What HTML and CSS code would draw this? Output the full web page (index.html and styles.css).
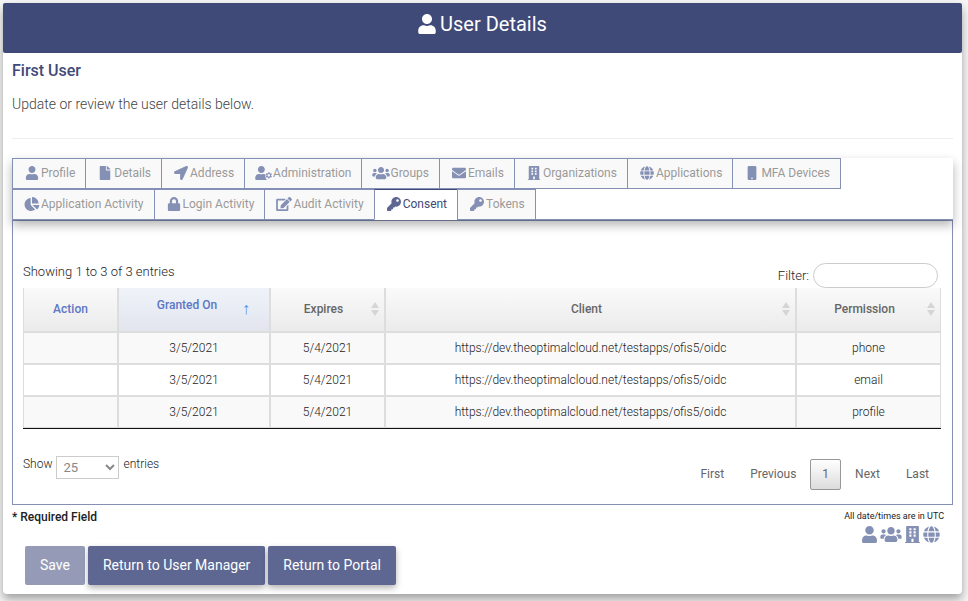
FILE: index.html
```html
<!DOCTYPE html>
<html lang="en">

<head>
    <meta charset="UTF-8">
    <meta name="viewport" content="width=device-width, initial-scale=1.0">
    <title>User Details</title>
    <link rel="stylesheet" href="styles.css">
</head>

<body>
    <svg class="sprite" aria-hidden="true">
        <symbol id="user" viewBox="0 0 448 512">
            <path d="M224 256c70.7 0 128-57.3 128-128S294.7 0 224 0 96 57.3 96 128s57.3 128 128 128zm89.6 32h-16.7c-22.2 10.2-46.9 16-72.9 16s-50.6-5.8-72.9-16h-16.7C60.2 288 0 348.2 0 422.4V464c0 26.5 21.5 48 48 48h352c26.5 0 48-21.5 48-48v-41.6c0-74.2-60.2-134.4-134.4-134.4z" />
        </symbol>
        <symbol id="file" viewBox="0 0 384 512">
            <path d="M224 136V0H24C10.7 0 0 10.7 0 24v464c0 13.3 10.7 24 24 24h336c13.3 0 24-10.7 24-24V160H248c-13.2 0-24-10.8-24-24zm160-14.1v6.1H256V0h6.1c6.4 0 12.5 2.5 17 7l97.9 98c4.5 4.5 7 10.6 7 16.9z" />
        </symbol>
        <symbol id="arrow" viewBox="0 0 512 512">
            <path d="M444.52 3.52L28.74 195.42c-47.97 22.39-31.98 92.75 19.19 92.75h175.91v175.91c0 51.17 70.36 67.17 92.75 19.19l191.9-415.78c15.99-38.39-25.59-79.97-63.97-63.97z" />
        </symbol>
        <symbol id="user-cog" viewBox="0 0 640 512">
            <path d="M224 256c70.7 0 128-57.3 128-128S294.7 0 224 0 96 57.3 96 128s57.3 128 128 128zm89.6 32h-16.7c-22.2 10.2-46.9 16-72.9 16s-50.6-5.8-72.9-16h-16.7C60.2 288 0 348.2 0 422.4V464c0 26.5 21.5 48 48 48h352c10 0 18-3 25-7l-1-14-30-18c-12-9-16-22-12-36l7-20-15-15c-10-11-12-23-7-36l18-38c-20-24-44-40-71-40z" />
            <path fill-rule="evenodd" d="M474 225h44l8 38 24 14 37-13 22 38-29 26v28l29 26-22 38-37-13-24 14-8 38h-44l-8-38-24-14-37 13-22-38 29-26v-28l-29-26 22-38 37 13 24-14zM496 295a47 47 0 1 0 0 94 47 47 0 0 0 0-94z" />
        </symbol>
        <symbol id="users" viewBox="0 0 640 512">
            <path d="M96 224c35.3 0 64-28.7 64-64s-28.7-64-64-64-64 28.7-64 64 28.7 64 64 64zm448 0c35.3 0 64-28.7 64-64s-28.7-64-64-64-64 28.7-64 64 28.7 64 64 64zm32 32h-64c-17.6 0-33.5 7.1-45.1 18.6 40.3 22.1 68.9 62 75.1 109.4h66c17.7 0 32-14.3 32-32v-32c0-35.3-28.7-64-64-64zm-256 0c61.9 0 112-50.1 112-112S381.9 32 320 32 208 82.1 208 144s50.1 112 112 112zm76.8 32h-8.3c-20.8 10-43.9 16-68.5 16s-47.6-6-68.5-16h-8.3C179.6 288 128 339.6 128 403.2V432c0 26.5 21.5 48 48 48h288c26.5 0 48-21.5 48-48v-28.8c0-63.6-51.6-115.2-115.2-115.2zm-223.7-13.4C161.5 263.1 145.6 256 128 256H64c-35.3 0-64 28.7-64 64v32c0 17.7 14.3 32 32 32h65.9c6.3-47.4 34.9-87.3 75.2-109.4z" />
        </symbol>
        <symbol id="envelope" viewBox="0 0 512 512">
            <path d="M502.3 190.8c3.9-3.1 9.7-.2 9.7 4.7V400c0 26.5-21.5 48-48 48H48c-26.5 0-48-21.5-48-48V195.6c0-5 5.7-7.8 9.7-4.7 22.4 17.4 52.1 39.5 154.1 113.6 21.1 15.4 56.7 47.8 92.2 47.6 35.7.3 72-32.8 92.3-47.6 102-74.1 131.6-96.3 154-113.7zM256 320c23.2.4 56.6-29.2 73.4-41.4 132.7-96.3 142.8-104.7 173.4-128.7 5.8-4.5 9.2-11.5 9.2-18.9v-19c0-26.5-21.5-48-48-48H48c-26.5 0-48 21.5-48 48v19c0 7.4 3.4 14.3 9.2 18.9 30.6 23.9 40.7 32.4 173.4 128.7 16.8 12.2 50.2 41.8 73.4 41.4z" />
        </symbol>
        <symbol id="building" viewBox="0 0 448 512">
            <path fill-rule="evenodd" d="M436 480h-20V24c0-13.3-10.7-24-24-24H56C42.7 0 32 10.7 32 24v456H12c-6.6 0-12 5.4-12 12v20h448v-20c0-6.6-5.4-12-12-12zM128 64h64v64h-64zM256 64h64v64h-64zM128 160h64v64h-64zM256 160h64v64h-64zM128 256h64v64h-64zM256 256h64v64h-64zM192 384h64v96h-64z" />
        </symbol>
        <symbol id="globe" viewBox="0 0 496 512">
            <path d="M336.5 160C322 70.7 287.8 8 248 8s-74 62.7-88.5 152h177zM152 256c0 22.2 1.2 43.5 3.3 64h185.3c2.1-20.5 3.3-41.8 3.3-64s-1.2-43.5-3.3-64H155.3c-2.1 20.5-3.3 41.8-3.3 64zm324.7-96c-28.6-67.9-86.5-120.4-158-141.6 24.4 33.8 41.2 84.7 50 141.6h108zM177.2 18.4C105.8 39.6 47.8 92.1 19.3 160h108c8.7-56.9 25.5-107.8 49.9-141.6zM487.4 192H372.7c2.1 21 3.3 42.5 3.3 64s-1.2 43-3.3 64h114.6c5.5-20.5 8.6-41.8 8.6-64s-3.1-43.5-8.5-64zM120 256c0-21.5 1.2-43 3.3-64H8.6C3.2 212.5 0 233.8 0 256s3.2 43.5 8.6 64h114.6c-2-21-3.2-42.5-3.2-64zm39.5 96c14.5 89.3 48.7 152 88.5 152s74-62.7 88.5-152h-177zm159.3 141.6c71.4-21.2 129.4-73.7 158-141.6h-108c-8.8 56.9-25.6 107.8-50 141.6zM19.3 352c28.6 67.9 86.5 120.4 158 141.6-24.4-33.8-41.2-84.7-50-141.6h-108z" />
        </symbol>
        <symbol id="mobile" viewBox="0 0 320 512">
            <path d="M272 0H48C21.5 0 0 21.5 0 48v416c0 26.5 21.5 48 48 48h224c26.5 0 48-21.5 48-48V48c0-26.5-21.5-48-48-48zM160 480c-17.7 0-32-14.3-32-32s14.3-32 32-32 32 14.3 32 32-14.3 32-32 32z" />
        </symbol>
        <symbol id="pie" viewBox="0 0 544 512">
            <path d="M527.79 288H290.5l158.03 158.03c6.04 6.04 15.98 6.53 22.19.68 38.7-36.46 65.32-85.56 73.13-140.86 1.34-9.46-6.51-17.85-16.06-17.85zm-15.83-64.8C503.72 103.74 408.26 8.28 288.8.04 279.68-.59 272 7.1 272 16.24V240h223.77c9.14 0 16.82-7.68 16.19-16.8zM224 288V50.71c0-9.55-8.39-17.4-17.84-16.06C86.99 51.49-4.1 155.6.14 280.37 4.5 408.51 114.83 513.59 243.03 511.98c50.4-.63 96.97-16.87 135.26-44.03 7.9-5.6 8.42-17.23 1.57-24.08L224 288z" />
        </symbol>
        <symbol id="lock" viewBox="0 0 448 512">
            <path d="M400 224h-24v-72C376 68.2 307.8 0 224 0S72 68.2 72 152v72H48c-26.5 0-48 21.5-48 48v192c0 26.5 21.5 48 48 48h352c26.5 0 48-21.5 48-48V272c0-26.5-21.5-48-48-48zm-104 0H152v-72c0-39.7 32.3-72 72-72s72 32.3 72 72v72z" />
        </symbol>
        <symbol id="edit" viewBox="0 0 576 512">
            <path d="M402.6 83.2l90.2 90.2c3.8 3.8 3.8 10 0 13.8L274.4 405.6l-92.8 10.3c-12.4 1.4-22.9-9.1-21.5-21.5l10.3-92.8L388.8 83.2c3.8-3.8 10-3.8 13.8 0zm162-22.9l-48.8-48.8c-15.2-15.2-39.9-15.2-55.2 0l-35.4 35.4c-3.8 3.8-3.8 10 0 13.8l90.2 90.2c3.8 3.8 10 3.8 13.8 0l35.4-35.4c15.2-15.3 15.2-40 0-55.2zM384 346.2V448H64V128h229.8c3.2 0 6.2-1.3 8.5-3.5l40-40c7.6-7.6 2.2-20.5-8.5-20.5H48C21.5 64 0 85.5 0 112v352c0 26.5 21.5 48 48 48h352c26.5 0 48-21.5 48-48V306.2c0-10.7-12.9-16-20.5-8.5l-40 40c-2.2 2.3-3.5 5.3-3.5 8.5z" />
        </symbol>
        <symbol id="key" viewBox="0 0 512 512">
            <path d="M512 176C512 273.2 433.2 352 336 352c-11.22 0-22.19-1.06-32.83-3.07l-24.01 27.01A24 24 0 0 1 261.22 384H224v40c0 13.26-10.75 24-24 24h-40v40c0 13.26-10.75 24-24 24H24c-13.26 0-24-10.75-24-24v-78.06c0-6.37 2.53-12.47 7.03-16.97l161.8-161.8C163.1 213.8 160 195.27 160 176 160 78.8 238.8 0 336 0 433.49 0 512 78.51 512 176zM336 128c0 26.51 21.49 48 48 48s48-21.49 48-48-21.49-48-48-48-48 21.49-48 48z" />
        </symbol>
        <symbol id="sort" viewBox="0 0 8 14">
            <path d="M4 0l4 6H0zM0 8h8l-4 6z" />
        </symbol>
    </svg>

    <main class="card">
        <header class="header">
            <svg class="header-icon"><use href="#user" /></svg>
            <h1>User Details</h1>
        </header>
        <div class="content">
            <h2>First User</h2>
            <p class="intro">Update or review the user details below.</p>
            <hr>

            <nav class="tabs">
                <a class="tab" href="#"><svg class="icon"><use href="#user" /></svg>Profile</a>
                <a class="tab" href="#"><svg class="icon"><use href="#file" /></svg>Details</a>
                <a class="tab" href="#"><svg class="icon"><use href="#arrow" /></svg>Address</a>
                <a class="tab" href="#"><svg class="icon"><use href="#user-cog" /></svg>Administration</a>
                <a class="tab" href="#"><svg class="icon"><use href="#users" /></svg>Groups</a>
                <a class="tab" href="#"><svg class="icon"><use href="#envelope" /></svg>Emails</a>
                <a class="tab" href="#"><svg class="icon"><use href="#building" /></svg>Organizations</a>
                <a class="tab" href="#"><svg class="icon"><use href="#globe" /></svg>Applications</a>
                <a class="tab" href="#"><svg class="icon"><use href="#mobile" /></svg>MFA Devices</a>
                <a class="tab" href="#"><svg class="icon"><use href="#pie" /></svg>Application Activity</a>
                <a class="tab" href="#"><svg class="icon"><use href="#lock" /></svg>Login Activity</a>
                <a class="tab" href="#"><svg class="icon"><use href="#edit" /></svg>Audit Activity</a>
                <a class="tab active" href="#"><svg class="icon"><use href="#key" /></svg>Consent</a>
                <a class="tab" href="#"><svg class="icon"><use href="#key" /></svg>Tokens</a>
            </nav>

            <section class="panel">
                <div class="table-top">
                    <div class="info">Showing 1 to 3 of 3 entries</div>
                    <div class="filter">
                        <label for="filter">Filter:</label>
                        <input type="search" id="filter">
                    </div>
                </div>

                <table class="grid">
                    <colgroup>
                        <col class="col-action">
                        <col class="col-granted">
                        <col class="col-expires">
                        <col>
                        <col class="col-permission">
                    </colgroup>
                    <thead>
                        <tr>
                            <th class="link">Action</th>
                            <th class="link sorted"><div class="head"><span>Granted On</span><span class="up">↑</span></div></th>
                            <th><div class="head"><span>Expires</span><svg class="sort"><use href="#sort" /></svg></div></th>
                            <th><div class="head"><span>Client</span><svg class="sort"><use href="#sort" /></svg></div></th>
                            <th><div class="head"><span>Permission</span><svg class="sort"><use href="#sort" /></svg></div></th>
                        </tr>
                    </thead>
                    <tbody>
                        <tr>
                            <td></td>
                            <td>3/5/2021</td>
                            <td>5/4/2021</td>
                            <td>https://dev.theoptimalcloud.net/testapps/ofis5/oidc</td>
                            <td>phone</td>
                        </tr>
                        <tr>
                            <td></td>
                            <td>3/5/2021</td>
                            <td>5/4/2021</td>
                            <td>https://dev.theoptimalcloud.net/testapps/ofis5/oidc</td>
                            <td>email</td>
                        </tr>
                        <tr>
                            <td></td>
                            <td>3/5/2021</td>
                            <td>5/4/2021</td>
                            <td>https://dev.theoptimalcloud.net/testapps/ofis5/oidc</td>
                            <td>profile</td>
                        </tr>
                    </tbody>
                </table>

                <div class="table-bottom">
                    <div class="length">
                        <label for="length">Show</label>
                        <select id="length">
                            <option>10</option>
                            <option selected>25</option>
                            <option>50</option>
                        </select>
                        <span>entries</span>
                    </div>
                    <div class="pager">
                        <button type="button">First</button>
                        <button type="button">Previous</button>
                        <button type="button" class="current">1</button>
                        <button type="button">Next</button>
                        <button type="button">Last</button>
                    </div>
                </div>
            </section>

            <footer class="footer">
                <div>
                    <p class="required">* Required Field</p>
                    <div class="buttons">
                        <button type="button" class="btn" disabled>Save</button>
                        <button type="button" class="btn">Return to User Manager</button>
                        <button type="button" class="btn">Return to Portal</button>
                    </div>
                </div>
                <div class="notes">
                    <p>All date/times are in UTC</p>
                    <div class="legend">
                        <svg class="legend-icon"><use href="#user" /></svg>
                        <svg class="legend-icon wide"><use href="#users" /></svg>
                        <svg class="legend-icon"><use href="#building" /></svg>
                        <svg class="legend-icon"><use href="#globe" /></svg>
                    </div>
                </div>
            </footer>
        </div>
    </main>
</body>

</html>
```
FILE: styles.css
```css
* {
    box-sizing: border-box;
    margin: 0;
    padding: 0;
}

body {
    padding: 3px 6px 7px 3px;
    background-color: #f5f5f5;
    font-family: Roboto, "Liberation Sans", sans-serif;
    font-size: 12px;
    font-weight: 300;
    color: #222;
}

button,
input,
select {
    font-family: inherit;
    font-size: inherit;
    font-weight: inherit;
}

svg {
    fill: currentColor;
}

.sprite {
    display: none;
}

.card {
    background-color: white;
    border-radius: 4px;
    box-shadow: 0 5px 10px rgba(0, 0, 0, 0.35);
}

.header {
    display: flex;
    justify-content: center;
    gap: 4px;
    height: 50px;
    padding-top: 9px;
    border-radius: 2px;
    background-color: #3f4a78;
    color: white;
}

.header h1 {
    font-size: 20px;
    line-height: 24px;
    font-weight: 400;
}

.header-icon {
    width: 18px;
    height: 20px;
    margin-top: 2px;
}

.content {
    padding: 8px 9px 9px;
}

h2 {
    font-size: 16px;
    line-height: 20px;
    font-weight: 500;
    color: #3f4a78;
}

.intro {
    margin: 13px 0 24px;
    font-size: 14px;
    line-height: 20px;
    color: #444;
}

hr {
    border: 0;
    border-top: 1px solid #eee;
    margin-bottom: 19px;
}

.tabs {
    position: relative;
    display: flex;
    flex-wrap: wrap;
    padding-left: 1px;
    background-color: white;
    box-shadow: inset 0 -1px #8590b5, 0 5px 10px rgba(0, 0, 0, 0.3);
}

.tab {
    display: flex;
    align-items: center;
    height: 31px;
    margin-left: -1px;
    padding: 0 10px 2px;
    border: 1px solid #8590b5;
    background-color: #f9f9f9;
    font-weight: 400;
    color: #999;
    text-decoration: none;
}

.icon {
    width: 18px;
    height: 14px;
    color: #8590b5;
}

.tab.active {
    border-top-color: #3f4a78;
    border-bottom-color: white;
    background-color: white;
    color: #3f4a78;
}

.active .icon {
    color: #5d6791;
}

.panel {
    padding: 42px 11px 14px 10px;
    border: 1px solid #8590b5;
}

.table-top {
    display: flex;
    justify-content: space-between;
    font-size: 13px;
}

.info {
    line-height: 18px;
}

.filter {
    display: flex;
    align-items: center;
    gap: 4px;
    padding-right: 3px;
}

.filter input {
    width: 125px;
    height: 25px;
    padding: 0 10px;
    border: 1px solid #ccc;
    border-radius: 13px;
    background-color: white;
}

.grid {
    width: 100%;
    border-spacing: 0;
    border-bottom: 1px solid #111;
    table-layout: fixed;
    text-align: center;
}

.col-action {
    width: 95px;
}

.col-granted {
    width: 152px;
}

.col-expires {
    width: 115px;
}

.col-permission {
    width: 145px;
}

.grid th,
.grid td {
    border: 1px solid #ddd;
}

.grid th {
    height: 44px;
    padding: 0 5px 2px;
    border-top: 0;
    background-image: linear-gradient(#fafafa, #ebebeb);
    font-weight: 500;
    color: #666;
}

.grid th.link {
    color: #5c77c6;
}

.grid th.sorted {
    background-image: linear-gradient(#eff3f9, #e2e5ee);
}

.head {
    display: grid;
    grid-template-columns: 1fr 8px;
    align-items: center;
}

.sort {
    width: 8px;
    height: 14px;
    color: #d5d5d5;
}

.sorted .head {
    grid-template-columns: 1fr 36px;
}

.sorted .head span:first-child {
    padding: 0 0 8px 22px;
}

.up {
    font-size: 16px;
    font-weight: 400;
    line-height: 16px;
    color: #4f8df0;
}

.grid td {
    height: 32px;
    padding: 0 5px;
}

.grid tbody tr:nth-child(odd) {
    background-color: #f9f9f9;
}

.table-bottom {
    display: flex;
    justify-content: space-between;
    padding-top: 27px;
}

.length {
    display: flex;
    gap: 4px;
    line-height: 16px;
}

.length select {
    width: 63px;
    height: 23px;
    padding-left: 2px;
    border: 1px solid #ccc;
    background-color: white;
    font-size: 13px;
    font-weight: 400;
    color: #888;
}

.pager {
    display: flex;
    gap: 2px;
    padding-top: 3px;
}

.pager button {
    height: 31px;
    padding: 0 11px 2px;
    border: 1px solid transparent;
    border-radius: 2px;
    background: none;
    font-weight: 400;
    color: #666;
}

.pager .current {
    border-color: #979797;
    background-image: linear-gradient(white, #dcdcdc);
}

.footer {
    display: flex;
    justify-content: space-between;
    padding-top: 3px;
}

.required {
    line-height: 18px;
    font-weight: 500;
}

.buttons {
    display: flex;
    gap: 3px;
    padding: 20px 0 0 13px;
}

.btn {
    height: 39px;
    padding: 0 15px 2px;
    border: 0;
    border-radius: 2px;
    background-color: #5d6791;
    box-shadow: 0 3px 6px rgba(0, 0, 0, 0.3);
    font-size: 14px;
    font-weight: 400;
    color: white;
}

.btn:disabled {
    opacity: 0.65;
    box-shadow: none;
}

.notes {
    padding: 2px 9px 0 0;
    font-size: 9px;
    line-height: 12px;
    font-weight: 400;
    text-align: right;
}

.legend {
    display: flex;
    justify-content: flex-end;
    gap: 2px;
    padding: 4px 4px 0 0;
    color: #8590b5;
}

.legend-icon {
    width: 17px;
    height: 17px;
}

.legend-icon.wide {
    width: 22px;
}
```
